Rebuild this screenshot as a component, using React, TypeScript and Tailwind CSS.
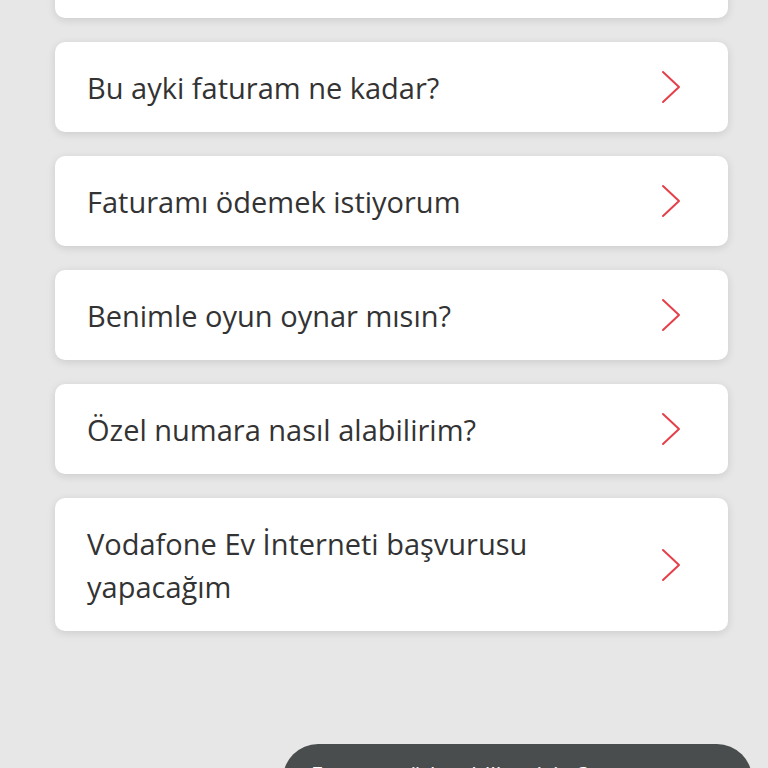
const items = [
  "Bu ayki faturam ne kadar?",
  "Faturamı ödemek istiyorum",
  "Benimle oyun oynar mısın?",
  "Özel numara nasıl alabilirim?",
  "Vodafone Ev İnterneti başvurusu yapacağım",
];

function Chevron() {
  return (
    <svg width="20" height="34" viewBox="0 0 20 34" fill="none" className="shrink-0">
      <path d="M2 2 L18 17 L2 32" stroke="#e5404a" strokeWidth="2" strokeLinecap="round" strokeLinejoin="round" />
    </svg>
  );
}

function Card({ text }: { text: string }) {
  return (
    <div className="flex items-center justify-between rounded-[10px] bg-white pl-8 pr-[47px] py-[23.5px] shadow-[0_2px_8px_rgba(0,0,0,0.12)]">
      <span className="max-w-[560px] text-[29px] leading-[43px] text-[#333333]">{text}</span>
      <Chevron />
    </div>
  );
}

export default function App() {
  return (
    <div
      className="h-[768px] w-[768px] overflow-hidden bg-[#e7e7e7]"
      style={{ fontFamily: '"Open Sans", "Noto Sans", sans-serif' }}
    >
      <div className="mt-[-72px] flex flex-col gap-6 pl-[55px] pr-10">
        <div className="h-[90px] rounded-[10px] bg-white shadow-[0_2px_8px_rgba(0,0,0,0.12)]" />
        {items.map((t) => (
          <Card key={t} text={t} />
        ))}
      </div>
      <div className="ml-[283px] mt-[113px] h-[70px] w-[469px] rounded-[35px] bg-[#4a4d4e] px-7 pt-[14px] text-[22px] text-white">
        Faturamı ödeyebilir miyim?
      </div>
    </div>
  );
}
